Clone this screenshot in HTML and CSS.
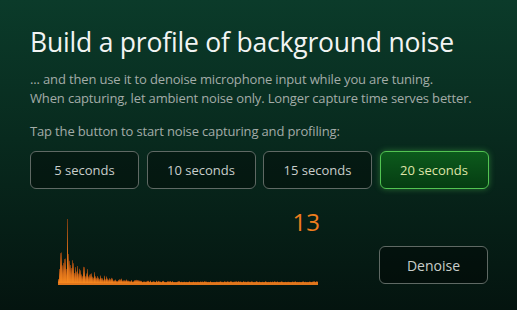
FILE: index.html
```html
<!DOCTYPE html>
<html lang="en">
  <head>
    <meta charset="UTF-8" />
    <meta name="viewport" content="width=device-width, initial-scale=1.0" />
    <title>Noise Profile</title>
    <link rel="stylesheet" href="styles.css">
  </head>
  <body>
    <main class="screen">
      <h1>Build a profile of background noise</h1>
      <p class="desc">... and then use it to denoise microphone input while you are tuning.<br>When capturing, let ambient noise only. Longer capture time serves better.</p>
      <p class="hint">Tap the button to start noise capturing and profiling:</p>

      <div class="durations">
        <button class="btn">5 seconds</button>
        <button class="btn">10 seconds</button>
        <button class="btn">15 seconds</button>
        <button class="btn active">20 seconds</button>
      </div>

      <div class="bottom">
        <div class="spectrum">
          <svg id="spectrum" width="260" height="68" viewBox="0 0 260 68">
            <defs>
              <linearGradient id="fade" x1="0" y1="1" x2="0" y2="0">
                <stop offset="0" stop-color="#f7891f" />
                <stop offset="0.5" stop-color="#d26a18" />
                <stop offset="1" stop-color="#74380f" />
              </linearGradient>
            </defs>
            <g id="bars" fill="url(#fade)"></g>
            <rect x="0" y="66" width="260" height="2" fill="#e0761c" />
          </svg>
          <span class="count">13</span>
        </div>
        <button class="btn denoise">Denoise</button>
      </div>
    </main>

    <script>
      // fake noise spectrum: sharp low-frequency peak, then a long decaying tail
      const bars = document.getElementById("bars");
      let seed = 7;
      function rnd() {
        seed = (seed * 9301 + 49297) % 233280;
        return seed / 233280;
      }
      let shapes = "";
      for (let x = 0; x < 260; x++) {
        let h;
        if (x === 9) h = 64;
        else if (x < 2) h = 4 + x * 10;
        else {
          const base = 34 * Math.exp(-(x - 2) / 22) + 1.5;
          h = base * (0.45 + rnd() * 0.8);
        }
        h = Math.max(1, Math.min(66, h));
        shapes += `<rect x="${x}" y="${66 - h}" width="1" height="${h}" />`;
      }
      bars.innerHTML = shapes;
    </script>
  </body>
</html>
```

FILE: styles.css
```css
html, body {
  margin: 0;
  height: 100%;
}
body {
  font-family: "Open Sans", "Noto Sans", sans-serif;
  background: linear-gradient(180deg, #0b3b2a 0%, #082a1e 45%, #04140f 100%);
  color: #f2f4f3;
  overflow: hidden;
}
.screen {
  padding: 24px 20px 0 30px;
}
h1 {
  margin: 0;
  font-size: 26.5px;
  font-weight: 400;
  line-height: 36px;
  letter-spacing: -0.2px;
}
.desc {
  margin: 10px 0 0;
  font-size: 13px;
  line-height: 18.5px;
  letter-spacing: -0.15px;
  color: #a3aca8;
}
.hint {
  margin: 15px 0 0;
  font-size: 13px;
  line-height: 19px;
  letter-spacing: -0.15px;
  color: #a3aca8;
}
.durations {
  display: grid;
  grid-template-columns: repeat(4, 109px);
  gap: 7.5px;
  margin-top: 10px;
}
.btn {
  height: 38px;
  font-family: inherit;
  font-size: 13px;
  color: #c9cecb;
  background: rgba(0, 0, 0, 0.35);
  border: 1.5px solid #5f6964;
  border-radius: 6px;
  padding: 0;
}
.btn.active {
  color: #dfe4a8;
  background: linear-gradient(180deg, #0c5a1c 0%, #053d12 100%);
  border-color: #52c452;
  box-shadow: 0 0 6px rgba(80, 200, 80, 0.45);
}
.bottom {
  display: flex;
  justify-content: space-between;
  align-items: flex-end;
  width: 458px;
  margin-top: 28px;
}
.spectrum {
  position: relative;
  margin-left: 28px;
  width: 260px;
  height: 68px;
}
.spectrum svg {
  display: block;
}
.count {
  position: absolute;
  right: -2px;
  top: -9px;
  font-size: 24px;
  line-height: 28px;
  color: #ef7d1e;
}
.denoise {
  width: 109px;
  margin-bottom: 1px;
  font-size: 14px;
}
```
